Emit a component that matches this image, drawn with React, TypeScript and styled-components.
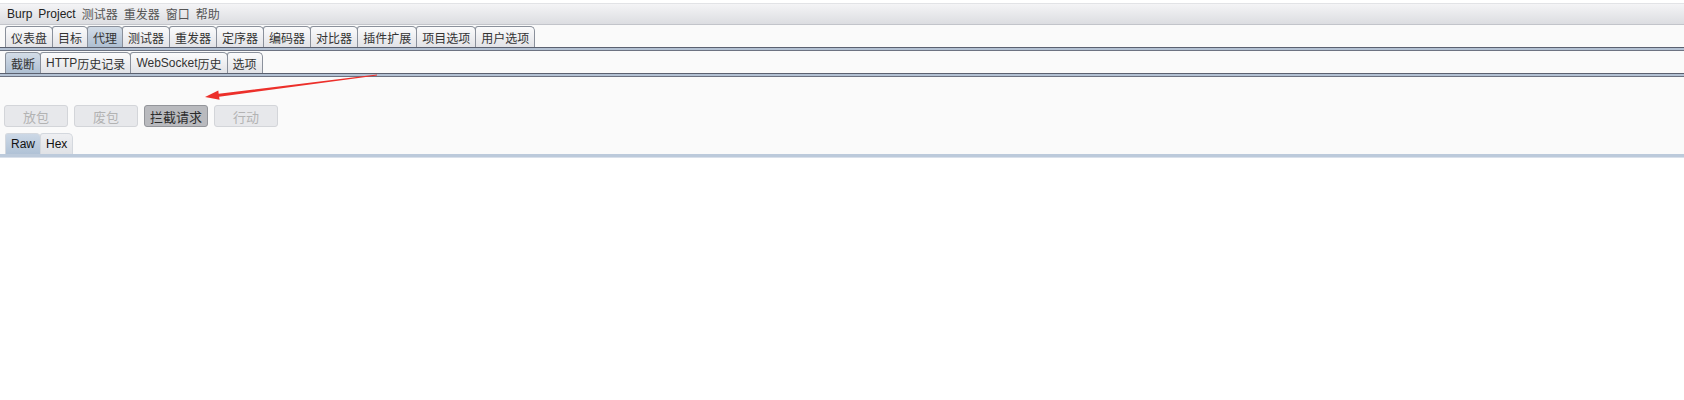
import React from 'react';
import styled, { createGlobalStyle } from 'styled-components';

const GlobalStyle = createGlobalStyle`
    html, body {
        margin: 0;
        padding: 0;
        background: #ffffff;
    }
    body {
        font-family: "Liberation Sans", "Noto Sans CJK SC", sans-serif;
        color: #333;
    }
`;

const CJK = `"Noto Sans CJK SC", "Liberation Sans", sans-serif`;

const Page = styled.div`
    position: relative;
    width: 1684px;
    height: 400px;
    background: #ffffff;
    padding-top: 3px;
    box-sizing: border-box;
`;

const Workspace = styled.div`
    background: #fafafa;
    display: flex;
    flex-direction: column;
`;

const MenuBar = styled.div`
    height: 20px;
    border-top: 1px solid #e2e3e6;
    border-bottom: 1px solid #c2c4ca;
    background: linear-gradient(#f4f4f6, #dcdde1);
    display: flex;
    align-items: center;
    gap: 6px;
    padding-left: 7px;
    font-size: 12px;
`;

const MenuItem = styled.span<{ $cjk?: boolean }>`
    font-family: ${p => (p.$cjk ? CJK : `"Liberation Sans", sans-serif`)};
    color: ${p => (p.$cjk ? '#555' : '#222')};
    line-height: 14px;
`;

const TabStrip = styled.div<{ $top: number }>`
    display: flex;
    align-items: flex-end;
    padding-left: 5px;
    margin-top: ${p => p.$top}px;
    height: 21px;
`;

const Tab = styled.div<{ $active?: boolean }>`
    height: 20px;
    padding: 0 5px;
    margin-right: -1px;
    border: 1px solid #8a909b;
    border-bottom: none;
    border-radius: 3px 5px 0 0;
    background: ${p =>
        p.$active
            ? 'linear-gradient(#d3dce7, #aebfd2)'
            : 'linear-gradient(#fbfbfc, #e2e3e7)'};
    display: flex;
    align-items: center;
    font-size: 12px;
    color: #333;
    white-space: nowrap;
`;

const Latin = styled.span`
    font-family: "Liberation Sans", sans-serif;
`;

const Han = styled.span`
    font-family: ${CJK};
`;

const TabRule = styled.div`
    height: 2px;
    border-top: 1px solid #5b6170;
    border-bottom: 1px solid #6d7382;
    background: #b3c1d3;
`;

const ButtonRow = styled.div`
    display: flex;
    gap: 6px;
    padding-left: 4px;
    margin-top: 28px;
`;

const ActionButton = styled.div<{ $enabled?: boolean }>`
    width: 64px;
    height: 22px;
    box-sizing: border-box;
    border-radius: 3px;
    border: 1px solid ${p => (p.$enabled ? '#93959a' : '#d3d5d9')};
    background: ${p => (p.$enabled ? '#b9babe' : '#e7e8eb')};
    color: ${p => (p.$enabled ? '#2b2b2b' : '#b3b3b3')};
    display: flex;
    align-items: center;
    justify-content: center;
    font-family: ${CJK};
    font-size: 13px;
`;

const EditorTabs = styled.div`
    display: flex;
    align-items: flex-end;
    padding-left: 5px;
    margin-top: 6px;
    height: 21px;
`;

const EditorTab = styled.div<{ $active?: boolean }>`
    height: 20px;
    padding: 0 5px;
    margin-right: -1px;
    border: 1px solid #d4d8de;
    border-bottom: none;
    border-radius: 3px 5px 0 0;
    background: ${p =>
        p.$active ? 'linear-gradient(#ccd8e6, #b0c2d6)' : 'linear-gradient(#eeeff2, #e0e2e6)'};
    display: flex;
    align-items: center;
    font-family: "Liberation Sans", sans-serif;
    font-size: 12px;
    color: #111;
`;

const EditorRule = styled.div`
    height: 3px;
    background: #bccadb;
    border-bottom: 1px solid #d9e0ea;
`;

const Annotation = styled.svg`
    position: absolute;
    left: 0;
    top: 0;
    pointer-events: none;
`;

const mainTabs = ['仪表盘', '目标', '代理', '测试器', '重发器', '定序器', '编码器', '对比器', '插件扩展', '项目选项', '用户选项'];

export default function App() {
    return (
        <Page>
            <GlobalStyle />
            <Workspace>
                <MenuBar>
                    <MenuItem>Burp</MenuItem>
                    <MenuItem>Project</MenuItem>
                    <MenuItem $cjk>测试器</MenuItem>
                    <MenuItem $cjk>重发器</MenuItem>
                    <MenuItem $cjk>窗口</MenuItem>
                    <MenuItem $cjk>帮助</MenuItem>
                </MenuBar>
                <TabStrip $top={1}>
                    {mainTabs.map(t => (
                        <Tab key={t} $active={t === '代理'}><Han>{t}</Han></Tab>
                    ))}
                </TabStrip>
                <TabRule />
                <TabStrip $top={1}>
                    <Tab $active><Han>截断</Han></Tab>
                    <Tab><Latin>HTTP</Latin><Han>历史记录</Han></Tab>
                    <Tab><Latin>WebSocket</Latin><Han>历史</Han></Tab>
                    <Tab><Han>选项</Han></Tab>
                </TabStrip>
                <TabRule />
                <ButtonRow>
                    <ActionButton>放包</ActionButton>
                    <ActionButton>废包</ActionButton>
                    <ActionButton $enabled>拦截请求</ActionButton>
                    <ActionButton>行动</ActionButton>
                </ButtonRow>
                <EditorTabs>
                    <EditorTab $active>Raw</EditorTab>
                    <EditorTab>Hex</EditorTab>
                </EditorTabs>
                <EditorRule />
            </Workspace>
            <Annotation width="1684" height="400">
                <polygon
                    points="377,74.6 218.7,93.7 218.3,90.6 205,97 219.6,99.8 219.1,96.7 377,75.4"
                    fill="#ec2f2a"
                />
            </Annotation>
        </Page>
    );
}
